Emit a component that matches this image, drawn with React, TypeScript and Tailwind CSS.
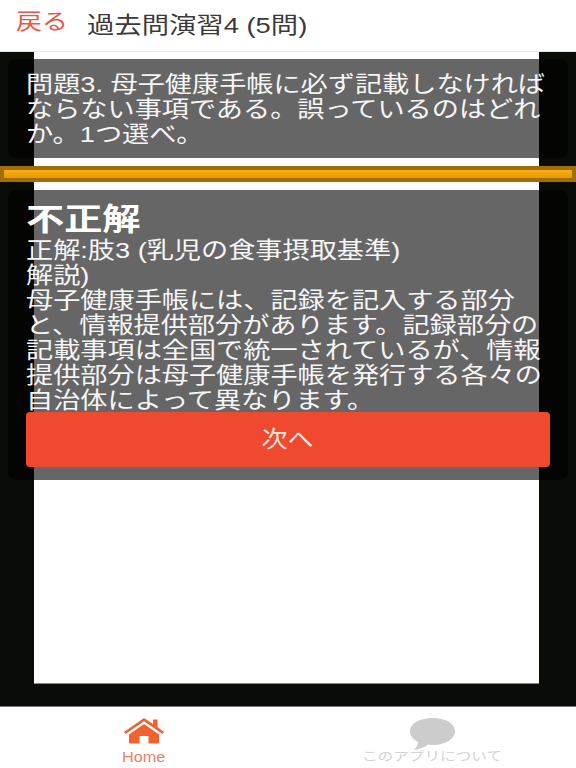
const jp = "font-['Liberation_Sans','Noto_Sans_CJK_JP',sans-serif]";

function HomeIcon() {
  return (
    <svg width="40" height="26" viewBox="0 0 40 26" className="block">
      <path fill="#f26230" d="M20 0 L29 6 V1.5 H33.5 V9 L40 14 L38.5 16 L20 3.2 L1.5 16 L0 14 Z" />
      <path fill="#f26230" d="M20 6 L35 16.5 V24.5 Q35 25.5 34 25.5 H24.5 V18 H15.5 V25.5 H6 Q5 25.5 5 24.5 V16.5 Z" />
    </svg>
  );
}

function BubbleIcon() {
  return (
    <svg width="45" height="32" viewBox="0 0 45 32" className="block">
      <path fill="#cccccc" d="M22.5 0 C35 0 45 5.2 45 13 C45 21 35 27 22.5 27 C21 27 19.5 26.8 18 26.6 C14.5 29.5 10 31.5 3.5 32 C6.5 29.5 8 27 8 24 C3 21.5 0 17.5 0 13 C0 5.2 10 0 22.5 0 Z" />
    </svg>
  );
}

function Panel({ className, children }: { className: string; children?: React.ReactNode }) {
  return (
    <div className={`mx-2 rounded-lg bg-black/60 px-[19px] text-[22.5px] leading-[25px] text-[#f6f6f6] ${className}`}>
      {children}
    </div>
  );
}

function Line({ children }: { children: React.ReactNode }) {
  return <p className="-ml-px origin-top-left translate-y-px scale-x-[1.207] whitespace-nowrap">{children}</p>;
}

export default function App() {
  return (
    <div className={`flex h-[768px] w-[576px] flex-col overflow-hidden bg-white ${jp}`}>
      <div className="flex h-[52px] shrink-0 items-start border-b border-[#e8e8e8] pl-4">
        <span className="mt-[9px] origin-left scale-x-[1.18] text-[22px] leading-[26px] text-[#e8574a]">戻る</span>
        <span className="ml-[27px] mt-[13px] origin-left scale-x-[1.215] whitespace-nowrap text-[22.5px] leading-[26px] text-[#3a3a3a]">過去問演習4 (5問)</span>
      </div>

      <div className="relative flex-1 bg-[#0a0c07]">
        <div className="absolute left-[34px] top-0 h-[632px] w-[505px] border-b border-[#888] bg-white" />
        <div className="relative flex flex-col pt-[7px]">
          <Panel className="h-[99px] pt-3">
            <Line>問題3. 母子健康手帳に必ず記載しなければ</Line>
            <Line>ならない事項である。誤っているのはどれ</Line>
            <Line>か。1つ選べ。</Line>
          </Panel>
          <div className="mt-2 h-4 border-x-4 border-y-[4px] border-[#a06d08] bg-gradient-to-b from-[#f8ad10] to-[#e69a05]" />
          <Panel className="mt-2 h-[290px] pt-[9px]">
            <p className="-ml-px origin-top-left translate-y-[2px] scale-x-[1.23] whitespace-nowrap text-[31px] font-bold leading-[38px] text-white">不正解</p>
            <Line>正解:肢3 (乳児の食事摂取基準)</Line>
            <Line>解説)</Line>
            <Line>母子健康手帳には、記録を記入する部分</Line>
            <Line>と、情報提供部分があります。記録部分の</Line>
            <Line>記載事項は全国で統一されているが、情報</Line>
            <Line>提供部分は母子健康手帳を発行する各々の</Line>
            <Line>自治体によって異なります。</Line>
            <div className="-mx-px flex h-[55px] items-center justify-center rounded bg-[#ef4a30] text-[#fbe4df]">
              <span className="scale-x-[1.16]">次へ</span>
            </div>
          </Panel>
        </div>
      </div>

      <div className="flex h-[62px] shrink-0 border-t border-[#777] bg-white">
        <div className="relative flex w-[288px] flex-col items-center pt-[11px]">
          <HomeIcon />
          <span className="absolute top-[42px] scale-x-[1.16] text-[14px] font-medium leading-[16px] text-[#ea8068]">Home</span>
        </div>
        <div className="relative flex w-[288px] flex-col items-center pt-[11px]">
          <BubbleIcon />
          <span className="absolute top-[42px] scale-x-[1.25] whitespace-nowrap text-[12.5px] leading-[16px] text-[#d4d4d4]">このアプリについて</span>
        </div>
      </div>
    </div>
  );
}
